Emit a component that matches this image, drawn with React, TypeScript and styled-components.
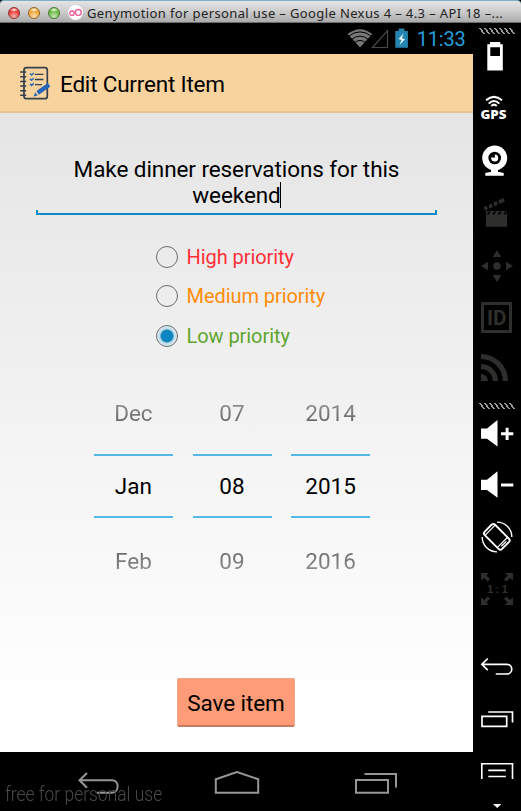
import React from "react";
import styled, { createGlobalStyle } from "styled-components";

const GlobalStyle = createGlobalStyle`
  * { box-sizing: border-box; }
  html, body { margin: 0; padding: 0; background: #000; }
  body { font-family: Roboto, "Liberation Sans", sans-serif; overflow: hidden; }
  svg { display: block; flex: none; }
`;

const Window = styled.div`
  width: 521px;
  height: 811px;
  display: flex;
  flex-direction: column;
  background: #000;
`;

const TitleBar = styled.header`
  height: 23px;
  flex: none;
  display: flex;
  align-items: center;
  padding: 2px 0 0 8px;
  border-top: 1px solid #7fb0c8;
  border-bottom: 1px solid #6a6a6a;
  border-radius: 4px 4px 0 0;
  background: linear-gradient(#e4e4e4, #cfcfcf 45%, #ababab);
`;

const Light = styled.span<{ $core: string; $rim: string }>`
  width: 12px;
  height: 12px;
  flex: none;
  margin-right: 8px;
  border-radius: 50%;
  border: 1px solid ${(p) => p.$rim};
  background: radial-gradient(ellipse 4px 2px at 50% 18%, #fff 0, transparent 100%),
    radial-gradient(circle at 50% 85%, #ffffffa0, transparent 55%), ${(p) => p.$core};
`;

const TitleText = styled.span`
  margin-left: 4px;
  font: 13px/18px "Noto Sans", sans-serif;
  letter-spacing: 0.38px;
  color: #222;
  white-space: nowrap;
`;

const Body = styled.div`
  flex: 1;
  display: flex;
`;

const Phone = styled.main`
  width: 473px;
  display: flex;
  flex-direction: column;
`;

const StatusBar = styled.div`
  height: 31px;
  flex: none;
  display: flex;
  align-items: center;
  justify-content: flex-end;
  padding-right: 7.5px;
`;

const Clock = styled.span`
  margin-left: 6.5px;
  padding-top: 1px;
  font-size: 20px;
  line-height: 31px;
  letter-spacing: -0.2px;
  color: #229fdc;
`;

const ActionBar = styled.div`
  height: 59px;
  flex: none;
  display: flex;
  align-items: center;
  padding-left: 19px;
  background: #f8d39e;
  border-bottom: 2px solid #e3c28f;
`;

const ActionTitle = styled.h1`
  margin: 2px 0 0 8px;
  font-size: 22.5px;
  line-height: 28px;
  font-weight: 400;
  letter-spacing: -0.2px;
  color: #000;
`;

const Content = styled.div`
  height: 639px;
  flex: none;
  display: flex;
  flex-direction: column;
  align-items: center;
  background: linear-gradient(#e5e5e5, #fff 92%);
`;

const TextField = styled.div`
  width: 401px;
  height: 102px;
  padding: 43px 0 0 0;
  display: flex;
  flex-direction: column;
  align-items: center;
  background:
    linear-gradient(#0c8bc4, #0c8bc4) left bottom / 2px 5px no-repeat,
    linear-gradient(#0c8bc4, #0c8bc4) right bottom / 2px 5px no-repeat,
    linear-gradient(#0c8bc4, #0c8bc4) left bottom / 100% 2px no-repeat;
`;

const TextLine = styled.span`
  display: flex;
  font-size: 22.5px;
  line-height: 26px;
  letter-spacing: -0.08px;
  color: #000;
  white-space: nowrap;
`;

const Caret = styled.i`
  width: 1px;
  height: 26px;
  margin: 0 0 0 -1px;
  background: #000;
`;

const RadioGroup = styled.div`
  width: 172px;
  margin: 22px 0 0 10px;
  display: flex;
  flex-direction: column;
`;

const RadioRow = styled.div<{ $color: string }>`
  height: 39.5px;
  display: flex;
  align-items: center;
  gap: 9px;
  font-size: 20px;
  line-height: 24px;
  letter-spacing: -0.06px;
  color: ${(p) => p.$color};
`;

const Ring = styled.span<{ $on?: boolean }>`
  width: 22px;
  height: 22px;
  flex: none;
  border-radius: 50%;
  border: 1px solid #6c6c6c;
  background: ${(p) =>
    p.$on
      ? "radial-gradient(circle, #0c86c2 5.6px, #5f9fc0 6.4px, #b5d9ea 7px, #cfe6f0 9px, #e6eef2 10px)"
      : "transparent"};
`;

const Picker = styled.div`
  display: flex;
  gap: 19.6px;
  margin: 22px 0 0 -9px;
`;

const Wheel = styled.div`
  width: 79px;
  display: flex;
  flex-direction: column;
  font-size: 22.5px;
  text-align: center;
`;

const Neighbour = styled.div<{ $after?: boolean }>`
  height: ${(p) => (p.$after ? "76px" : "76.5px")};
  padding-top: ${(p) => (p.$after ? "29px" : "21px")};
  line-height: 28px;
  background: linear-gradient(${(p) => (p.$after ? "#5c5c5c 35%, #9c9c9c 80%" : "#9c9c9c 25%, #5c5c5c 65%")});
  -webkit-background-clip: text;
  background-clip: text;
  color: transparent;
`;

const Selected = styled.div`
  height: 63.5px;
  line-height: 60px;
  border: solid #55b9e6;
  border-width: 2px 0;
  color: #000;
`;

const SaveButton = styled.button`
  width: 118px;
  height: 49px;
  margin: 84px 0 0 -1px;
  padding: 2px 0 0;
  border: 1px solid #f0a488;
  border-bottom: 2px solid #c8795c;
  border-radius: 2px;
  background: #ff9b76;
  font: 22.5px/28px Roboto, sans-serif;
  letter-spacing: -0.1px;
  color: #000;
`;

const NavBar = styled.footer`
  position: relative;
  height: 59px;
  flex: none;
  display: flex;
  align-items: center;
  gap: 94px;
  padding: 3px 0 0 77px;

  & > svg:nth-of-type(3) {
    margin-left: 1px;
  }
`;

const Watermark = styled.span`
  position: absolute;
  left: 5px;
  bottom: 5px;
  font-size: 20px;
  line-height: 24px;
  font-weight: 300;
  color: #4a4a4a;
  white-space: nowrap;
  transform: scaleX(0.872);
  transform-origin: left;
`;

const Sidebar = styled.aside`
  width: 48px;
  display: flex;
  flex-direction: column;
`;

const Slot = ({ top, bottom, dim, children }: { top: number; bottom: number; dim?: boolean; children: React.ReactNode }) => {
  const c = dim ? "#2e2e2c" : "#fff";
  return (
    <svg width="48" height={bottom - top} viewBox={`0 ${top} 48 ${bottom - top}`} fill={c} color={c}>
      {children}
    </svg>
  );
};

const Hatch = ({ y }: { y: number }) => (
  <g fill="#9a9a9a">
    {[0, 1, 2, 3, 4, 5, 6].map((i) => (
      <path key={i} d={`M${6 + i * 5} ${y}h2v1h1v1h1v2h1v1h1v1h-2v-1h-1v-1h-1v-2h-1v-1h-1z`} />
    ))}
  </g>
);

const Speaker = ({ y }: { y: number }) => <path d={`M8 ${y + 8.5}h6L24.5 ${y}v26.5L14 ${y + 18.7}H8z`} />;

const NotebookIcon = () => (
  <svg width="33" height="34" viewBox="19 66 33 34" fill="none">
    <rect x="24" y="67.7" width="23.3" height="31" rx="2.5" stroke="#35404d" strokeWidth="1.7" />
    <path d="M20.2 72h6M20.2 76.7h6M20.2 81.4h6M20.2 86.1h6M20.2 90.8h6M20.2 95.2h6" stroke="#35404d" strokeWidth="1.5" />
    <path d="M35 74.3h8.5M35 79.5h8.5M35 84.7h7" stroke="#35404d" strokeWidth="1.3" />
    <path d="M30 73.5l1.6 1.5 2.2-2M30 78.7l1.6 1.5 2.2-2M30 83.9l1.6 1.5 2.2-2" stroke="#2869b5" strokeWidth="1.5" />
    <path d="M36.500 91L47.800 83l2.600 3.600-11.500 8.100z" fill="#2467b8" />
    <path d="M35.300 92.500l2.400 3-4.200 1z" fill="#2467b8" />
  </svg>
);

const StatusIcons = () => (
  <svg width="62" height="31" viewBox="348 23 62 31" fill="none">
    <path d="M347.8 34Q360 24.500 372.200 34L360 47.500z" fill="#777" />
    <path d="M348.500 36.200Q360 27.500 371.500 36.200M351.500 39.500Q360 32.800 368.500 39.500M354.500 42.600Q360 38.200 365.500 42.600" stroke="#000" strokeWidth="1" />
    <path d="M372.500 47.500H387.500V30.500z" stroke="#484848" strokeWidth="1.200" />
    <path d="M395.300 31h3.500v-2.500h5.600v2.500h3.500v16.700h-12.600z" fill="#2585b0" />
    <path d="M403.500 33.500l-5 5.500 3 1-2 5 5.500-5.800-3-1z" fill="#e8f6fc" />
  </svg>
);

const priorities = [
  { label: "High priority", color: "#ff2f38" },
  { label: "Medium priority", color: "#ff8c0a" },
  { label: "Low priority", color: "#60a52c", on: true },
];

const wheels = [
  ["Dec", "Jan", "Feb"],
  ["07", "08", "09"],
  ["2014", "2015", "2016"],
];

export default function App() {
  return (
    <>
      <GlobalStyle />
      <Window>
        <TitleBar>
          <Light $core="#e8433f" $rim="#8e3a36" />
          <Light $core="#f2a93c" $rim="#96692a" />
          <Light $core="#72bd4c" $rim="#4a7a36" />
          <svg width="15" height="15" viewBox="0 0 15 15" fill="none" stroke="#ee5b96" strokeWidth="1.3">
            <circle cx="7.500" cy="7.500" r="7.500" fill="#fff" stroke="none" />
            <circle cx="4" cy="8.200" r="2.200" />
            <circle cx="10.400" cy="7.400" r="2.900" />
          </svg>
          <TitleText>Genymotion for personal use – Google Nexus 4 – 4.3 – API 18 –...</TitleText>
        </TitleBar>
        <Body>
          <Phone>
            <StatusBar>
              <StatusIcons />
              <Clock>11:33</Clock>
            </StatusBar>
            <ActionBar>
              <NotebookIcon />
              <ActionTitle>Edit Current Item</ActionTitle>
            </ActionBar>
            <Content>
              <TextField>
                <TextLine>Make dinner reservations for this</TextLine>
                <TextLine>
                  weekend
                  <Caret />
                </TextLine>
              </TextField>
              <RadioGroup>
                {priorities.map((p) => (
                  <RadioRow key={p.label} $color={p.color}>
                    <Ring $on={p.on} />
                    {p.label}
                  </RadioRow>
                ))}
              </RadioGroup>
              <Picker>
                {wheels.map(([before, current, after]) => (
                  <Wheel key={current}>
                    <Neighbour>{before}</Neighbour>
                    <Selected>{current}</Selected>
                    <Neighbour $after>{after}</Neighbour>
                  </Wheel>
                ))}
              </Picker>
              <SaveButton>Save item</SaveButton>
            </Content>
            <NavBar>
              <svg width="43" height="24" viewBox="77 771 43 24" fill="none" stroke="#969696" strokeWidth="2">
                <path d="M87 773l-7.500 7.200 7.500 7.500M80 780.200h32c7.500 0 7.500 12.500 0 12.500H97" />
              </svg>
              <svg width="46" height="24" viewBox="213.500 771 46 24" fill="none" stroke="#969696" strokeWidth="2">
                <path d="M215.300 792.700V779.300l21.200-7.300 21.200 7.300v13.400z" />
              </svg>
              <svg width="43" height="24" viewBox="355 771 43 24" fill="none" stroke="#969696" strokeWidth="2">
                <path d="M356 780h32v12.800h-32zM364.500 774H396v13.500" />
              </svg>
              <Watermark>free for personal use</Watermark>
            </NavBar>
          </Phone>
          <Sidebar>
            <Slot top={23} bottom={36}>
              <Hatch y={28} />
            </Slot>
            <Slot top={36} bottom={82}>
              <path fillRule="evenodd" d="M14.300 44.200H17V42h10.300v2.200h2.500v26.200H14.300zM17.300 47.300V56H27v-8.700z" />
            </Slot>
            <Slot top={82} bottom={132}>
              <path d="M13 100.300Q21 93.500 29 100.300M15.700 103.600Q21 98.500 26.300 103.600M18.300 106Q21 103.300 23.700 106" fill="none" stroke="currentColor" strokeWidth="2" />
              <text x="7.500" y="119.300" fontFamily="Open Sans" fontWeight="800" fontSize="11.800" textLength="26" lengthAdjust="spacingAndGlyphs">GPS</text>
            </Slot>
            <Slot top={132} bottom={186}>
              <circle cx="21.700" cy="158" r="12.500" />
              <path d="M12.300 175.700v-2.800q9.300-3 18.400 0v2.800zM18 168h7v6h-7z" />
              <circle cx="21.700" cy="158" r="6.300" fill="#000" />
              <circle cx="21.700" cy="158" r="3.500" />
              <path d="M17 157l4.800.7V153z" fill="#000" />
            </Slot>
            <Slot top={186} bottom={238} dim>
              <path d="M13 211h21v15.700H13zM10.600 207.300l19.700-9.300 1.500 3.400-19.700 9.300z" />
              <path d="M17 211.500l-2.500 3M22.500 211.500l-2.500 3M28 211.500l-2.500 3M33.500 211.500l-2.500 3M14.500 205l1.300 4.500M19.500 202.700l1.300 4.500M24.500 200.400l1.300 4.500" stroke="#000" strokeWidth="1.800" />
            </Slot>
            <Slot top={238} bottom={292} dim>
              <circle cx="24" cy="266" r="3.700" />
              <path d="M24 250.300l4.300 6.700h-8.600zM24 282l4.300-7h-8.600zM8 266l7-4.200v8.400zM40 266l-7-4.200v8.400z" />
            </Slot>
            <Slot top={292} bottom={342} dim>
              <path d="M9.500 303.500h28v28h-28z" fill="none" stroke="currentColor" strokeWidth="3" />
              <text x="14" y="324.700" fontFamily="Roboto" fontWeight="700" fontSize="19.700" textLength="19.500" lengthAdjust="spacingAndGlyphs">ID</text>
            </Slot>
            <Slot top={342} bottom={390} dim>
              <path d="M8 356.500A24.300 24.300 0 0 1 32.300 381M8 366.500A14.300 14.300 0 0 1 22.300 381" fill="none" stroke="currentColor" strokeWidth="5.200" />
              <path d="M8 374a7 7 0 0 1 7 7H8z" />
            </Slot>
            <Slot top={390} bottom={412}>
              <Hatch y={403} />
            </Slot>
            <Slot top={412} bottom={459}>
              <Speaker y={420} />
              <path d="M28 432.300h12.300v3H28zM32.600 427.700h3V440h-3z" />
            </Slot>
            <Slot top={459} bottom={510}>
              <Speaker y={471.3} />
              <path d="M28 483.500h12.300v3H28z" />
            </Slot>
            <Slot top={510} bottom={562}>
              <g fill="none" stroke="currentColor" transform="rotate(-45 24 537)">
                <rect x="16.700" y="524.500" width="14.600" height="24.500" rx="2.500" strokeWidth="1.900" />
                <path d="M17 527.300h14M17 544.700h14" strokeWidth="1.200" />
                <path d="M20.500 546.700h7" strokeWidth="1.300" />
                <path d="M34.500 526.500a14.800 14.800 0 0 1 0 21M13.500 526.500a14.800 14.800 0 0 0 0 21" strokeWidth="1.400" />
              </g>
            </Slot>
            <Slot top={562} bottom={615} dim>
              <path d="M8 573h8l-2.600 2.600 3.600 3.600-2.300 2.300-3.600-3.600L8 580.500zM40 573h-8l2.600 2.600-3.600 3.600 2.300 2.300 3.600-3.600 3.100 2.600zM8 605h8l-2.600-2.600 3.600-3.600-2.300-2.300-3.600 3.600-3.100-2.600zM40 605h-8l2.600-2.600-3.600-3.600 2.300-2.300 3.600 3.600 3.100-2.600z" />
              <text x="14" y="593.300" fontFamily="Liberation Sans" fontWeight="700" fontSize="11.500" textLength="21">1 : 1</text>
            </Slot>
            <Slot top={615} bottom={690}>
              <path d="M14.800 658.500l-6 5.800 6 5.900M9 664.300h24.500c7 0 7 9.700 0 9.700H22.700" fill="none" stroke="currentColor" strokeWidth="1.700" />
            </Slot>
            <Slot top={690} bottom={740}>
              <path d="M9 716.300h24.700v10H9zM15.300 712h24.200v10.500" fill="none" stroke="currentColor" strokeWidth="1.700" />
            </Slot>
            <Slot top={740} bottom={790}>
              <path d="M8.800 779v-15.200h30.700V779M15.300 770.400h17.500M15.300 776.500h17.500" fill="none" stroke="currentColor" strokeWidth="1.600" />
            </Slot>
            <Slot top={790} bottom={811}>
              <path d="M20 804h8.400l-4.200 4z" />
            </Slot>
          </Sidebar>
        </Body>
      </Window>
    </>
  );
}
